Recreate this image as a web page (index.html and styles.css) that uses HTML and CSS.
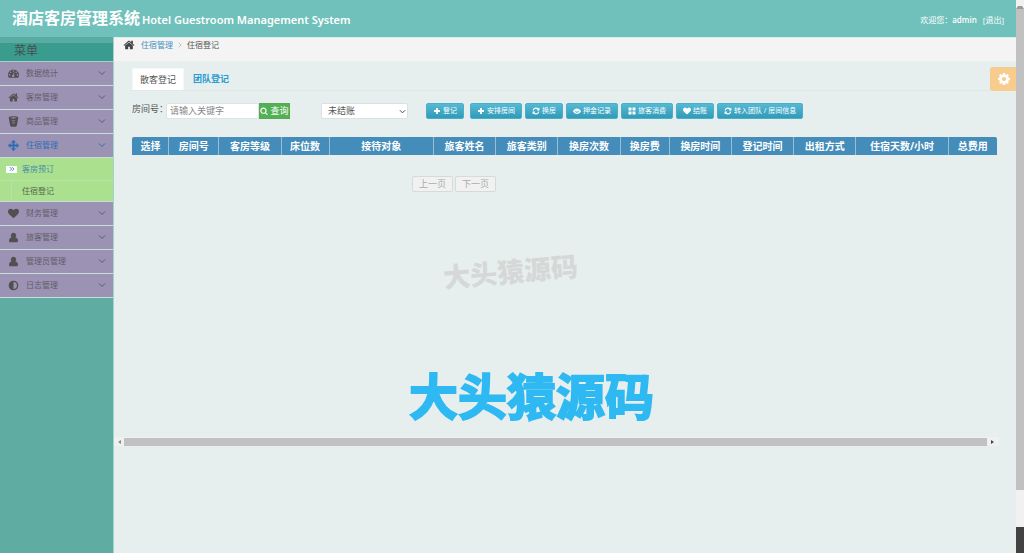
FILE: index.html
```html
<!DOCTYPE html>
<html lang="zh-CN">
<head>
<meta charset="utf-8">
<meta name="viewport" content="width=device-width, initial-scale=1">
<title>酒店客房管理系统</title>
<link rel="stylesheet" href="styles.css">
</head>
<body>
<svg class="sprite" aria-hidden="true">
  <symbol id="home" viewBox="0 0 1792 1792"><path d="M1472 992v480q0 26-19 45t-45 19h-384v-384h-256v384h-384q-26 0-45-19t-19-45v-480q0-1 .5-3t.5-3l575-474 575 474q1 2 1 6zm223-69l-62 74q-8 9-21 11h-3q-13 0-21-7l-692-577-692 577q-12 8-24 7-13-2-21-11l-62-74q-8-10-7-23.5t11-21.5l719-599q32-26 76-26t76 26l244 204v-195q0-14 9-23t23-9h192q14 0 23 9t9 23v408l219 182q10 8 11 21.5t-7 23.5z"/></symbol>
  <symbol id="heart" viewBox="0 0 1792 1792"><path d="M896 1664q-26 0-44-18l-624-602q-10-8-27.5-26t-55.5-65.5-68-97.5-53.5-121-23.5-138q0-220 127-344t351-124q62 0 126.5 21.5t120 58 95.5 68.5 76 68q36-36 76-68t95.5-68.5 120-58 126.5-21.5q224 0 351 124t127 344q0 221-229 450l-623 600q-18 18-44 18z"/></symbol>
  <symbol id="refresh" viewBox="0 0 1792 1792"><path d="M1639 1056q0 5-1 7-64 268-268 434.5t-478 166.5q-146 0-282.5-55t-243.5-157l-129 129q-19 19-45 19t-45-19-19-45v-448q0-26 19-45t45-19h448q26 0 45 19t19 45-19 45l-137 137q71 66 161 102t187 36q134 0 250-65t186-179q11-17 53-117 8-23 30-23h192q13 0 22.500 9.500t9.500 22.500zm25-800v448q0 26-19 45t-45 19h-448q-26 0-45-19t-19-45 19-45l138-138q-148-137-349-137-134 0-250 65t-186 179q-11 17-53 117-8 23-30 23h-199q-13 0-22.500-9.500t-9.500-22.500v-7q65-268 270-434.500t480-166.500q146 0 284 55.500t245 156.500l130-129q19-19 45-19t45 19 19 45z"/></symbol>
  <symbol id="cog" viewBox="0 0 1792 1792"><path d="M1152 896q0-106-75-181t-181-75-181 75-75 181 75 181 181 75 181-75 75-181zm512-109v222q0 12-8 23t-20 13l-185 28q-19 54-39 91 35 50 107 138 10 12 10 25t-9 23q-27 37-99 108t-94 71q-12 0-26-9l-138-108q-44 23-91 38-16 136-29 186-7 28-36 28h-222q-14 0-24.500-8.500t-11.500-21.500l-28-184q-49-16-90-37l-141 107q-10 9-25 9-14 0-25-11-126-114-165-168-7-10-7-23 0-12 8-23 15-21 51-66.500t54-70.500q-27-50-41-99l-183-27q-13-2-21-12.500t-8-23.500v-222q0-12 8-23t19-13l186-28q14-46 39-92-40-57-107-138-10-12-10-24 0-10 9-23 26-36 98.500-107.500t94.500-71.500q13 0 26 10l138 107q44-23 91-38 16-136 29-186 7-28 36-28h222q14 0 24.500 8.500t11.500 21.500l28 184q49 16 90 37l142-107q9-9 24-9 13 0 25 10 129 119 165 170 7 8 7 22 0 12-8 23-15 21-51 66.500t-54 70.500q26 50 41 98l183 28q13 2 21 12.500t8 23.500z"/></symbol>
  <symbol id="search" viewBox="0 0 1792 1792"><path d="M1216 832q0-185-131.500-316.500t-316.500-131.500-316.500 131.500-131.500 316.500 131.500 316.500 316.500 131.500 316.500-131.500 131.500-316.500zm512 832q0 52-38 90t-90 38q-54 0-90-38l-343-342q-179 124-399 124-143 0-273.500-55.500t-225-150-150-225-55.500-273.500 55.500-273.500 150-225 225-150 273.500-55.500 273.500 55.500 225 150 150 225 55.500 273.500q0 220-124 399l343 343q37 37 37 90z"/></symbol>
  <symbol id="dash" viewBox="0 0 16 16"><path fill-rule="evenodd" d="M8 2a8 8 0 0 0-8 8c0 1.600.4 3 1.200 4.200h13.600A8 8 0 0 0 8 2zM2.300 8.900a1.100 1.100 0 1 1 0 2.200 1.100 1.100 0 0 1 0-2.200zM4 5a1.100 1.100 0 1 1 0 2.200A1.100 1.100 0 0 1 4 5zM8 3.200a1.100 1.100 0 1 1 0 2.200 1.100 1.100 0 0 1 0-2.200zM12 5a1.100 1.100 0 1 1 0 2.200A1.100 1.100 0 0 1 12 5zM13.700 8.900a1.100 1.100 0 1 1 0 2.200 1.100 1.100 0 0 1 0-2.200zM8.400 6.300l1 .3-.8 3.400a1.700 1.700 0 1 1-1-.3z"/></symbol>
  <symbol id="bucket" viewBox="0 0 16 16"><path fill-rule="evenodd" d="M1 2.500C1 1.200 4.200.500 8 .500s7 .7 7 2L12.800 14c-.3 1-2.300 1.800-4.800 1.800S3.500 15 3.200 14zM3.400 2.600c1 .6 2.700.9 4.600.9s3.600-.3 4.600-.9C11.600 2 9.900 1.700 8 1.700s-3.600.3-4.600.9zM5.500 6.500l.2 1.200h4.600l.2-1.200zM6.300 9.300a1.700 1.700 0 1 0 3.400 0z"/></symbol>
  <symbol id="arrows" viewBox="0 0 16 16"><path d="M8 0l3 3.500H9v3.500h3.500V5L16 8l-3.500 3V9H9v3.500h2L8 16l-3-3.500h2V9H3.500v2L0 8l3.500-3v2H7V3.500H5z" stroke="currentColor" stroke-width=".6"/></symbol>
  <symbol id="user" viewBox="0 0 16 16"><path d="M8 1.200a3.900 3.900 0 0 1 2.700 6.700c2.400.1 3.800 2 3.800 4.800 0 1.400-.9 2.300-2.200 2.300H3.700c-1.300 0-2.200-.9-2.200-2.300 0-2.800 1.400-4.700 3.800-4.800A3.900 3.900 0 0 1 8 1.200z"/></symbol>
  <symbol id="adjust" viewBox="0 0 16 16"><path fill-rule="evenodd" d="M8 1a7 7 0 1 1 0 14A7 7 0 0 1 8 1zm0 2v10A5 5 0 0 0 8 3z"/></symbol>
  <symbol id="plus" viewBox="0 0 16 16"><path d="M6.200 2h3.600v4.200H14v3.600H9.800V14H6.200V9.800H2V6.200h4.200z"/></symbol>
  <symbol id="eye" viewBox="0 0 16 16"><path fill-rule="evenodd" d="M0 8.500C2 5 4.700 3 8 3s6 2 8 5.500C14 12 11.300 14 8 14S2 12 0 8.500zM5 6c-1.300 2.800.2 5.600 3 5.600S12.300 8.800 11 6c.2 2-1 3.500-3 3.500S4.800 8 5 6z"/></symbol>
  <symbol id="grid" viewBox="0 0 16 16"><path d="M1 1h6v6H1zM9 1h6v6H9zM1 9h6v6H1zM9 9h6v6H9z"/></symbol>
  <symbol id="down" viewBox="0 0 16 16"><path d="M2 5l6 6 6-6" fill="none" stroke="currentColor" stroke-width="2"/></symbol>
  <symbol id="right" viewBox="0 0 16 16"><path d="M5 2l6 6-6 6" fill="none" stroke="currentColor" stroke-width="2"/></symbol>
  <symbol id="double" viewBox="0 0 16 16"><path d="M2 3l5 5-5 5M8 3l5 5-5 5" fill="none" stroke="currentColor" stroke-width="2.500"/></symbol>
</svg>
<div class="window">
  <div class="page">
    <header class="topbar">
      <h1 class="brand">酒店客房管理系统 <small>Hotel Guestroom Management System</small></h1>
      <div class="account"><span>欢迎您：</span><b>admin</b><a href="#">[退出]</a></div>
    </header>
    <div class="body">
      <nav class="sidebar" aria-label="菜单">
        <h2 class="menu-title">菜单</h2>
        <a class="item" href="#"><svg class="ico"><use href="#dash"/></svg><span>数据统计</span><svg class="chev"><use href="#down"/></svg></a>
        <a class="item" href="#"><svg class="ico"><use href="#home"/></svg><span>客房管理</span><svg class="chev"><use href="#down"/></svg></a>
        <a class="item" href="#"><svg class="ico"><use href="#bucket"/></svg><span>商品管理</span><svg class="chev"><use href="#down"/></svg></a>
        <a class="item open" href="#"><svg class="ico"><use href="#arrows"/></svg><span>住宿管理</span><svg class="chev"><use href="#down"/></svg></a>
        <div class="submenu">
          <a class="sub current" href="#"><span class="mark"><svg><use href="#double"/></svg></span>客房预订</a>
          <a class="sub" href="#"><span class="branch"></span>住宿登记</a>
        </div>
        <a class="item" href="#"><svg class="ico"><use href="#heart"/></svg><span>财务管理</span><svg class="chev"><use href="#down"/></svg></a>
        <a class="item" href="#"><svg class="ico"><use href="#user"/></svg><span>旅客管理</span><svg class="chev"><use href="#down"/></svg></a>
        <a class="item" href="#"><svg class="ico"><use href="#user"/></svg><span>管理员管理</span><svg class="chev"><use href="#down"/></svg></a>
        <a class="item" href="#"><svg class="ico"><use href="#adjust"/></svg><span>日志管理</span><svg class="chev"><use href="#down"/></svg></a>
      </nav>
      <main class="main">
        <div class="crumbs"><svg class="crumb-home"><use href="#home"/></svg><a href="#">住宿管理</a><svg class="crumb-sep"><use href="#right"/></svg><span>住宿登记</span></div>
        <button class="settings" type="button" aria-label="设置"><svg><use href="#cog"/></svg></button>
        <div class="content">
          <div class="tabs"><a class="tab active" href="#">散客登记</a><a class="tab" href="#">团队登记</a></div>
          <form class="toolbar">
            <label for="room">房间号：</label>
            <div class="search"><input id="room" type="text" placeholder="请输入关键字"><button type="button"><svg><use href="#search"/></svg>查询</button></div>
            <div class="state"><select aria-label="结账状态"><option>未结账</option></select><svg><use href="#down"/></svg></div>
            <div class="actions">
              <button class="act first" type="button"><svg><use href="#plus"/></svg>登记</button>
              <button class="act" type="button"><svg><use href="#plus"/></svg>安排房间</button>
              <button class="act" type="button"><svg><use href="#refresh"/></svg>换房</button>
              <button class="act" type="button"><svg><use href="#eye"/></svg>押金记录</button>
              <button class="act" type="button"><svg><use href="#grid"/></svg>旅客消费</button>
              <button class="act" type="button"><svg><use href="#heart"/></svg>结账</button>
              <button class="act" type="button"><svg><use href="#refresh"/></svg>转入团队 / 房间信息</button>
            </div>
          </form>
          <table class="guests">
            <colgroup><col class="c36"><col class="c50"><col class="c62"><col class="c48"><col class="c104"><col class="c62"><col class="c62"><col class="c62"><col class="c49"><col class="c62"><col class="c62"><col class="c62"><col class="c92"><col class="c49"></colgroup>
            <thead><tr><th>选择</th><th>房间号</th><th>客房等级</th><th>床位数</th><th>接待对象</th><th>旅客姓名</th><th>旅客类别</th><th>换房次数</th><th>换房费</th><th>换房时间</th><th>登记时间</th><th>出租方式</th><th>住宿天数/小时</th><th>总费用</th></tr></thead>
          </table>
          <div class="pager"><button type="button" disabled>上一页</button><button type="button" disabled>下一页</button></div>
        </div>
        <div class="hscroll" aria-hidden="true"><i class="left"></i><i class="thumb"></i><i class="right"></i></div>
        <div class="mark-small">大头猿源码</div>
        <div class="mark-large">大头猿源码</div>
      </main>
    </div>
  </div>
  <div class="vscroll" aria-hidden="true"><i class="up"></i><i class="thumb"></i><i class="rest"></i><i class="dock"></i></div>
</div>
</body>
</html>
```

FILE: styles.css
```css
* { box-sizing: border-box; }
body { margin: 0; color: #555; font: 8px/12px "Open Sans", "Noto Sans CJK SC", sans-serif; }
a { color: inherit; text-decoration: none; }
button, input, select { font: inherit; margin: 0; }
svg { display: block; flex: none; fill: currentColor; }
.sprite { position: absolute; width: 0; height: 0; }

.window { display: flex; min-height: 100vh; background: #e6efee; }
.page { flex: 1; min-width: 0; display: flex; flex-direction: column; }
.body { flex: 1; display: flex; }

.topbar { display: flex; align-items: center; justify-content: space-between; height: 37px; padding: 0 12px; background: #70c1bb; color: #fff; }
.brand { display: flex; align-items: baseline; gap: 2px; margin: 0; font-size: 16px; line-height: 24px; font-weight: 700; white-space: nowrap; }
.brand small { font-family: "Noto Sans", "Open Sans", sans-serif; font-size: 11px; font-weight: 600; }
.account { display: flex; padding-top: 3px; white-space: nowrap; }
.account b { font-weight: 600; }
.account a { margin-left: 6px; }

.sidebar { flex: none; width: 114px; background: #5faca2; border-right: 1px solid #a4d3cd; }
.menu-title { margin: 0; height: 25px; padding-left: 14px; border-top: 6px solid #5aaca2; border-bottom: 1px solid #a9cfcb; background: #399c8f; color: #47504f; font-size: 12px; line-height: 16px; font-weight: 400; }
.item { display: flex; align-items: center; height: 24px; padding: 0 7px 1px 8px; background: #9c92b3; border-bottom: 1px solid #c9dcdc; color: #625c6a; }
.item span { flex: 1; }
.ico { width: 11px; height: 11px; margin-right: 7px; color: #505050; }
.chev { width: 8px; height: 8px; }
.item.open, .item.open .ico { color: #2d6db5; }
.submenu { background: #abe08f; border-bottom: 1px solid #c9dcdc; }
.sub { display: flex; align-items: center; height: 22px; padding-left: 6px; color: #576652; }
.sub + .sub { height: 21px; border-top: 1px solid #bce3a8; }
.sub.current { color: #4a8eaa; }
.mark { display: flex; justify-content: center; align-items: center; width: 11px; height: 7px; margin-right: 5px; background: #fff; color: #4b88b7; }
.mark svg { width: 6px; height: 6px; }
.branch { align-self: stretch; width: 11px; margin: 0 0 0 5px; border-left: 1px solid #bdddad; }

.main { position: relative; flex: 1; min-width: 0; }
.crumbs { display: flex; align-items: center; height: 25px; padding: 0 9px 9px; background: #f4f4f4; border-top: 1px solid #d9efed; border-bottom: 1px solid #e9eeee; }
.crumb-home { width: 12px; height: 12px; margin-right: 6px; color: #444; }
.crumbs a { color: #4590bd; }
.crumb-sep { width: 6px; height: 6px; margin: 0 4px; color: #aaa; }
.settings { position: absolute; top: 30px; right: 0; display: grid; place-items: center; width: 26px; height: 24px; padding: 0; border: 1px solid #f3cd96; border-right: 0; border-radius: 3px 0 0 3px; background: #f7cc8d; color: #fff; }
.settings svg { width: 14px; height: 14px; }

.content { min-height: 375px; padding: 6px 19px 0 18px; }
.tabs { display: flex; height: 23px; border-bottom: 1px solid #e0e7e7; font-size: 9px; line-height: 22px; }
.tab { padding: 0 8px; color: #2b9bd0; font-weight: 700; }
.tab.active { margin-right: 1px; padding: 0 7px; border: 1px solid #f5f8f8; border-bottom: 0; border-radius: 1px 1px 0 0; background: #fff; color: #555; font-weight: 400; }

.toolbar { display: flex; align-items: flex-start; padding-top: 12px; font-size: 9px; white-space: nowrap; }
.toolbar label { width: 34px; }
.search { display: flex; height: 16px; }
.search input { width: 93px; padding: 0 3px; border: 1px solid #dce4e4; border-radius: 2px 0 0 2px; background: #fff; color: #555; outline: 0; }
.search input::placeholder { color: #888; }
.search button { display: flex; align-items: center; justify-content: center; gap: 2px; width: 31px; padding: 0; border: 1px solid #5aa65a; background: #53b153; color: #fff; }
.search svg { width: 8px; height: 8px; }
.state { display: grid; align-items: center; width: 87px; height: 16px; margin-left: 31px; }
.state select, .state svg { grid-area: 1 / 1; }
.state select { width: 100%; height: 16px; padding: 0 6px; appearance: none; border: 1px solid #d9e1e1; border-radius: 2px; background: #fff; color: #555; }
.state svg { justify-self: end; width: 7px; height: 7px; margin-right: 2px; color: #333; pointer-events: none; }
.actions { display: flex; gap: 3px; margin-left: 18px; font-size: 7px; }
.act { display: flex; align-items: center; justify-content: center; gap: 2px; height: 16px; padding: 0 6px; border: 1px solid #49afca; border-radius: 2px; background: linear-gradient(#55b9d3, #319bb8); color: #fff; }
.act.first { margin-right: 3px; }
.act svg { width: 8px; height: 8px; }

.guests { width: 100%; margin-top: 18px; table-layout: fixed; border-collapse: separate; border-spacing: 0; }
.guests th { height: 18px; padding: 0; border-left: 1px solid #9bbdd2; background: #448cb9; color: #fff; font-size: 10px; line-height: 17px; font-weight: 700; white-space: nowrap; }
.guests th:first-child { border-left-color: #448cb9; border-radius: 2px 0 0 0; }
.guests th:last-child { border-radius: 0 2px 0 0; }
.c36 { width: 36px; }
.c48 { width: 48px; }
.c49 { width: 49px; }
.c50 { width: 50px; }
.c62 { width: 62px; }
.c92 { width: 92px; }
.c104 { width: 104px; }

.pager { display: flex; gap: 2px; margin-top: 21px; padding-left: 280px; }
.pager button { height: 16px; padding: 0 6px; border: 1px solid #d5dada; border-radius: 2px; background: #f1f1f1; color: #aaa; font-size: 9px; }

.hscroll { display: flex; align-items: center; height: 9px; margin-right: 17px; background: #eff1f1; }
.hscroll i { flex: none; }
.hscroll .thumb { flex: 1; height: 8px; background: #c1c1c1; }
.hscroll .left, .hscroll .right { width: 3px; height: 4px; border: solid transparent; border-width: 2px 0; }
.hscroll .left { margin: 0 3px 0 4px; border-right: 3px solid #888; }
.hscroll .right { margin: 0 5px 0 4px; border-left: 3px solid #444; }

.mark-small, .mark-large { position: absolute; white-space: nowrap; pointer-events: none; }
.mark-small { top: 219px; left: 329px; color: #d6d8d8; font-size: 27px; line-height: 32px; font-weight: 900; transform: rotate(-5deg); }
.mark-large { top: 331px; left: 295px; color: #2fb9f2; font-size: 49px; line-height: 56px; font-weight: 700; -webkit-text-stroke: 2px #2fb9f2; stroke-linejoin: round; }

.vscroll { display: flex; flex-direction: column; flex: none; width: 8px; background: #f1f1f1; }
.vscroll .up { height: 9px; border: 2px solid #f1f1f1; border-top-width: 4px; border-bottom: 3px solid #999; }
.vscroll .thumb { flex: 481; background: #c1c1c1; }
.vscroll .rest { flex: 37; }
.vscroll .dock { flex: 26; background: #424242; }
```
